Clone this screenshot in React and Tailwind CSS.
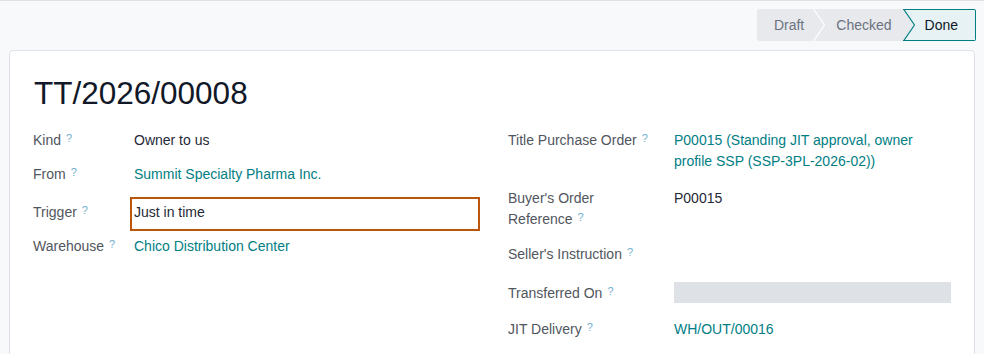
import React from 'react';

const Help = () => (
  <sup className="ml-[5px] text-[11px] text-[#71b0d0] relative top-[-3px]">?</sup>
);

const Field = ({ label, children, className = '' }) => (
  <div className={'flex ' + className}>
    <div className="w-[101px] shrink-0 text-[#51565e]">
      {label}
      <Help />
    </div>
    <div className="flex-1">{children}</div>
  </div>
);

const StatusBar = () => (
  <div className="flex h-[32px] text-[14px]">
    <div className="flex items-center bg-[#e7e9ed] pl-[17px] pr-[9px] text-[#6b7280] rounded-l-[2px]">Draft</div>
    <svg width="12" height="32" viewBox="0 0 12 32" className="block">
      <rect width="12" height="32" fill="#e7e9ed" />
      <polyline points="0.5,0 11.5,16 0.5,32" fill="none" stroke="#ffffff" strokeWidth="1.2" />
    </svg>
    <div className="flex items-center bg-[#e7e9ed] pl-[11px] pr-[11px] text-[#6b7280]">Checked</div>
    <svg width="12" height="32" viewBox="0 0 12 32" className="block">
      <rect width="12" height="32" fill="#e6f2f3" />
      <polygon points="0,0 11,16 0,32" fill="#e7e9ed" />
      <polyline points="0.5,0 11.5,16 0.5,32" fill="none" stroke="#017e84" strokeWidth="1.2" />
      <line x1="0" y1="0.5" x2="12" y2="0.5" stroke="#017e84" strokeWidth="1" />
      <line x1="0" y1="31.5" x2="12" y2="31.5" stroke="#017e84" strokeWidth="1" />
    </svg>
    <div className="flex items-center bg-[#e6f2f3] border-y border-r border-[#017e84] pl-[10px] pr-[17px] text-[#111827] rounded-r-[2px]">
      Done
    </div>
  </div>
);

export default function App() {
  return (
    <div
      className="w-[984px] h-[354px] overflow-hidden bg-[#f8f9fa] border-t border-[#dee2e6] text-[14px] leading-[20px]"
      style={{ fontFamily: '"Liberation Sans", Arial, sans-serif' }}
    >
      <div className="flex justify-end pt-[8px] pr-[8px]">
        <StatusBar />
      </div>
      <div className="ml-[9px] mr-[9px] mt-[9px] h-[400px] bg-white border border-[#dee2e6] rounded-[4px] px-[23px] pt-[24px]">
        <h1 className="text-[31.5px] leading-[36px] text-[#111827] ml-[1px]">TT/2026/00008</h1>
        <div className="flex mt-[19px]">
          <div className="w-[447px] shrink-0">
            <Field label="Kind">
              <span className="text-[#1f2937]">Owner to us</span>
            </Field>
            <Field label="From" className="mt-[14px]">
              <span className="text-[#017e84]">Summit Specialty Pharma Inc.</span>
            </Field>
            <div className="flex mt-[13px]">
              <div className="w-[97px] shrink-0 text-[#51565e] pt-[5px]">
                Trigger
                <Help />
              </div>
              <div className="w-[350px] h-[34px] border-2 border-[#bb560c] px-[2px] pt-[3px] text-[#1f2937]">
                Just in time
              </div>
            </div>
            <Field label="Warehouse" className="mt-[5px]">
              <span className="text-[#017e84]">Chico Distribution Center</span>
            </Field>
          </div>
          <div className="flex-1 pl-[28px]">
            <div className="flex">
              <div className="w-[166px] shrink-0 text-[#51565e]">
                Title Purchase Order
                <Help />
              </div>
              <div className="flex-1 text-[#017e84] leading-[21px]">
                P00015 (Standing JIT approval, owner profile SSP (SSP-3PL-2026-02))
              </div>
            </div>
            <div className="flex mt-[16px]">
              <div className="w-[166px] shrink-0 text-[#51565e] leading-[21px] pr-[60px]">
                Buyer's Order Reference
                <Help />
              </div>
              <div className="flex-1 text-[#1f2937]">P00015</div>
            </div>
            <div className="flex mt-[14px]">
              <div className="w-[166px] shrink-0 text-[#51565e]">
                Seller's Instruction
                <Help />
              </div>
              <div className="flex-1" />
            </div>
            <div className="flex mt-[18px] items-center">
              <div className="w-[166px] shrink-0 text-[#51565e]">
                Transferred On
                <Help />
              </div>
              <div className="flex-1 h-[21px] bg-[#dee2e6]" />
            </div>
            <div className="flex mt-[16px]">
              <div className="w-[166px] shrink-0 text-[#51565e]">
                JIT Delivery
                <Help />
              </div>
              <div className="flex-1 text-[#017e84]">WH/OUT/00016</div>
            </div>
          </div>
        </div>
      </div>
    </div>
  );
}
